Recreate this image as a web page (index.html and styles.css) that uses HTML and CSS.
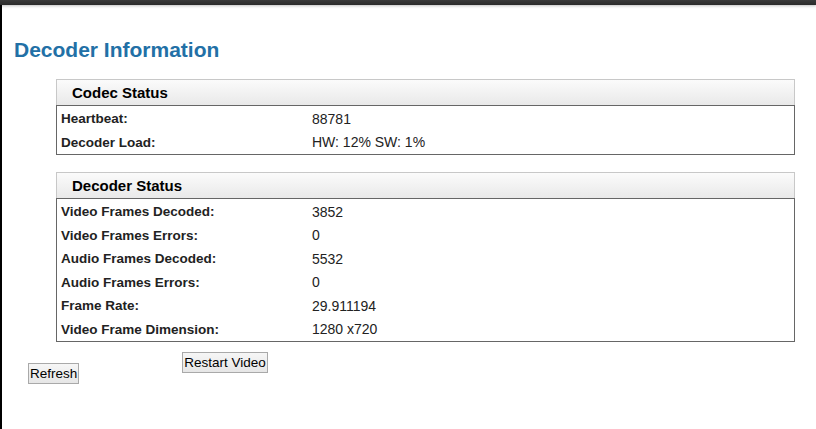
FILE: index.html
```html
<!DOCTYPE html>
<html>
<head>
<meta charset="utf-8">
<link rel="stylesheet" href="styles.css">
</head>
<body>
<div class="topbar"></div>
<div class="page">
  <h1 class="title">Decoder Information</h1>
  <div class="panel">
    <div class="panel-head">Codec Status</div>
    <div class="panel-body">
      <div class="row"><span class="label">Heartbeat:</span><span class="value">88781</span></div>
      <div class="row"><span class="label">Decoder Load:</span><span class="value">HW: 12% SW: 1%</span></div>
    </div>
  </div>
  <div class="panel">
    <div class="panel-head">Decoder Status</div>
    <div class="panel-body">
      <div class="row"><span class="label">Video Frames Decoded:</span><span class="value">3852</span></div>
      <div class="row"><span class="label">Video Frames Errors:</span><span class="value">0</span></div>
      <div class="row"><span class="label">Audio Frames Decoded:</span><span class="value">5532</span></div>
      <div class="row"><span class="label">Audio Frames Errors:</span><span class="value">0</span></div>
      <div class="row"><span class="label">Frame Rate:</span><span class="value">29.911194</span></div>
      <div class="row"><span class="label">Video Frame Dimension:</span><span class="value">1280 x720</span></div>
    </div>
  </div>
  <div class="actions">
    <button class="btn btn-refresh">Refresh</button>
    <button class="btn btn-restart">Restart Video</button>
  </div>
</div>
</body>
</html>
```
FILE: styles.css
```css
html, body {
  margin: 0;
  padding: 0;
  background: #fff;
  font-family: "Liberation Sans", Arial, sans-serif;
  color: #000;
}
body {
  height: 429px;
  overflow: hidden;
}
.topbar {
  height: 5px;
  background: linear-gradient(#3a3a3a, #2a2a2a);
  box-shadow: 0 1px 3px rgba(0,0,0,0.25);
  position: relative;
  z-index: 1;
}
.page {
  border-left: 2px solid #000;
  height: 424px;
  box-sizing: border-box;
}
.title {
  margin: 0;
  padding: 33px 0 0 12px;
  font-size: 21px;
  line-height: 24px;
  font-weight: bold;
  color: #2270a6;
}
.panel {
  margin: 17px 0 0 54px;
  width: 739px;
}
.panel + .panel {
  margin-top: 17px;
}
.panel-head {
  height: 25px;
  line-height: 26px;
  border: 1px solid #c8c8c8;
  border-bottom: none;
  background: linear-gradient(#fbfbfb, #e9e9e9);
  padding-left: 15px;
  font-weight: bold;
  font-size: 15px;
}
.panel-body {
  border: 1px solid #666;
  padding: 1px 0 0 0;
}
.row {
  display: flex;
  height: 23.5px;
  align-items: center;
}
.label {
  width: 251px;
  padding-left: 4px;
  font-weight: bold;
  font-size: 13.5px;
  color: #222;
}
.value {
  font-size: 14px;
  color: #222;
}
.actions {
  display: flex;
  align-items: flex-start;
  padding: 10px 0 0 26px;
}
.btn {
  font-family: "Liberation Sans", Arial, sans-serif;
  font-size: 13.5px;
  background: linear-gradient(#f6f6f6, #e6e6e6);
  border: 1px solid #a9a9a9;
  padding: 1px 1px;
  height: 21px;
  color: #000;
  border-radius: 0;
}
.btn-refresh {
  margin-top: 11px;
}
.btn-restart {
  margin-left: 103px;
}
```
